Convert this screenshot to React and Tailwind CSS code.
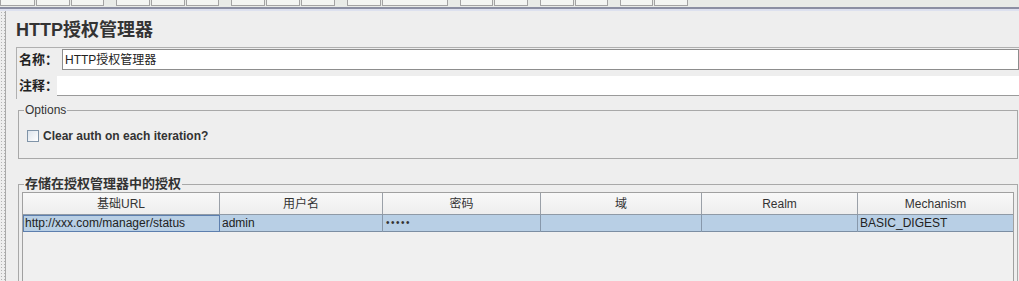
import React from 'react'

const toolbarGroups = [
  [35, 34, 33],
  [34, 34, 33],
  [34, 34, 34],
  [34, 66],
  [33, 34],
  [34, 33],
  [33, 34],
]

const columns = ['基础URL', '用户名', '密码', '域', 'Realm', 'Mechanism']

const rows = [
  { url: 'http://xxx.com/manager/status', user: 'admin', pass: '•••••', domain: '', realm: '', mech: 'BASIC_DIGEST' },
]

const font = { fontFamily: '"Liberation Sans", "Noto Sans CJK SC", sans-serif' }

// Toolbar stub at the very top (only the bottoms of the buttons are visible)
const Toolbar = () => (
  <div className="flex h-[7px] bg-[#e8ebe7]">
    {toolbarGroups.map((group, gi) => (
      <div key={gi} className="flex mr-[12px] gap-[1px]">
        {group.map((w, i) => (
          <div key={i} style={{ width: w }} className="h-[6px] border border-t-0 border-[#a3a3a3] bg-[#f3f5f2]" />
        ))}
      </div>
    ))}
  </div>
)

function App() {
  return (
    <div className="w-[1019px] h-[281px] overflow-hidden bg-[#eeeeee] text-[#222]" style={font}>
      <Toolbar />
      <div className="h-[2px] bg-[#8b8fa2]" />
      <div className="h-[2px] bg-[#dde1ef]" />

      <div className="flex h-[270px]">
        {/* splitter */}
        <div className="w-[6px] shrink-0 border-r border-[#a9a9a9] bg-[radial-gradient(#b4b4b4_1px,transparent_1px)] bg-[length:3px_3px]" />

        <div className="flex-1 pl-[10px]">
          {/* Title */}
          <div className="h-[36px] flex items-center text-[18px] font-bold text-[#333] pt-[3px]">HTTP授权管理器</div>

          {/* Name / comments */}
          <div className="border-l border-t border-[#b0b0b0] h-[52px] pt-[1px]">
            <div className="flex items-center h-[21px]">
              <span className="w-[45px] shrink-0 whitespace-nowrap pl-[2px] text-[13px] font-bold">名称：</span>
              <div className="flex-1 h-[21px] bg-white border border-[#8d8d8d] flex items-center pl-[2px] text-[12px] mr-[2px]">HTTP授权管理器</div>
            </div>
            <div className="flex items-center h-[20px] mt-[6px]">
              <span className="w-[40px] shrink-0 whitespace-nowrap pl-[2px] text-[13px] font-bold">注释：</span>
              <div className="flex-1 h-[20px] bg-white border-b border-[#9a9a9a]" />
            </div>
          </div>

          {/* Options */}
          <fieldset className="ml-[2px] mr-[3px] mt-[4px] h-[56px] border border-[#a8a8a8] px-[3px]">
            <legend className="ml-[2px] px-[1px] text-[12px] leading-[15px] text-[#333]">Options</legend>
            <label className="flex items-center gap-[4px] mt-[9px] ml-[5px]">
              <span className="w-[12px] h-[12px] border border-[#8094a8] bg-[linear-gradient(135deg,#dde4ec,#ffffff)]" />
              <span className="text-[12px] font-bold text-[#333]">Clear auth on each iteration?</span>
            </label>
          </fieldset>

          {/* Stored authorizations */}
          <fieldset className="ml-[2px] mr-[3px] mt-[17px] h-[120px] border border-[#a8a8a8] px-[3px]">
            <legend className="ml-[2px] px-[1px] text-[13px] leading-[16px] font-bold text-[#333]">存储在授权管理器中的授权</legend>
            <div className="w-[992px] h-[100px] border-l border-r border-t border-[#a0a0a0] bg-[#f0f0f0]">
              <div className="grid grid-cols-[197px_163px_158px_161px_156px_155px] h-[22px] bg-[linear-gradient(#f8f8f8,#eeeeee)] border-b border-[#8f9aa6]">
                {columns.map((c, i) => (
                  <div key={c} className={`flex items-center justify-center text-[12px] text-[#333] ${i < 5 ? 'border-r border-[#9aa0a8]' : ''}`}>{c}</div>
                ))}
              </div>
              {rows.map((r, ri) => (
                <div key={ri} className="grid grid-cols-[197px_163px_158px_161px_156px_155px] h-[17px] bg-[#b8cfe5] border-b border-[#7c8ea3] text-[12px] text-[#222]">
                  <div className="border border-[#5d7fae] pl-[1px] leading-[15px]">{r.url}</div>
                  <div className="border-r border-[#8798ab] pl-[2px] leading-[16px]">{r.user}</div>
                  <div className="border-r border-[#8798ab] pl-[3px] leading-[16px] text-[10px] tracking-[1.5px] text-[#333]">{r.pass}</div>
                  <div className="border-r border-[#8798ab] pl-[2px] leading-[16px]">{r.domain}</div>
                  <div className="border-r border-[#8798ab] pl-[2px] leading-[16px]">{r.realm}</div>
                  <div className="pl-[2px] leading-[16px]">{r.mech}</div>
                </div>
              ))}
            </div>
          </fieldset>
        </div>
      </div>
    </div>
  )
}

export default App
